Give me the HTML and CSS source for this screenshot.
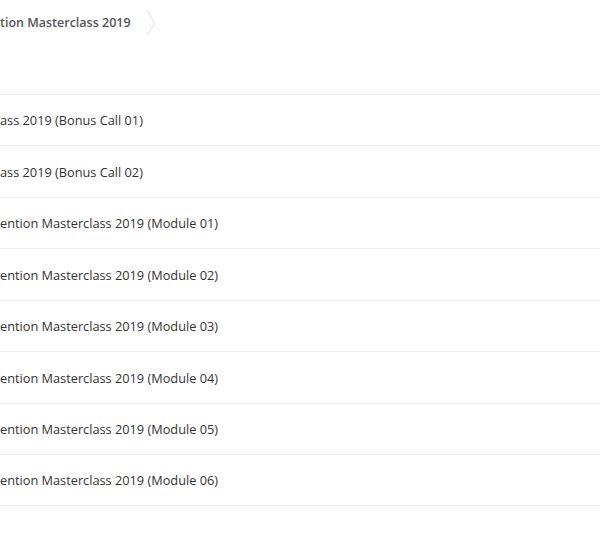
FILE: index.html
```html
<!DOCTYPE html>
<html lang="en">
<head>
  <meta charset="UTF-8" />
  <meta name="viewport" content="width=device-width, initial-scale=1.0" />
  <title>Masterclass 2019</title>
  <link rel="stylesheet" href="styles.css">
</head>
<body>
  <div class="page">
    <div class="breadcrumb">
      <span class="crumb">tion Masterclass 2019</span>
      <svg class="sep" width="10" height="26" viewBox="0 0 10 26"><path d="M1 0.5 L8.5 13 L1 25.5" fill="none" stroke="#dcdcdc" stroke-width="1"/></svg>
    </div>

    <ul class="lessons">
      <li class="lesson">ass 2019 (Bonus Call 01)</li>
      <li class="lesson">ass 2019 (Bonus Call 02)</li>
      <li class="lesson">ention Masterclass 2019 (Module 01)</li>
      <li class="lesson">ention Masterclass 2019 (Module 02)</li>
      <li class="lesson">ention Masterclass 2019 (Module 03)</li>
      <li class="lesson">ention Masterclass 2019 (Module 04)</li>
      <li class="lesson">ention Masterclass 2019 (Module 05)</li>
      <li class="lesson">ention Masterclass 2019 (Module 06)</li>
    </ul>
  </div>
</body>
</html>
```

FILE: styles.css
```css
body {
  margin: 0;
  background-color: #ffffff;
  color: #333333;
  font-family: "Open Sans", Arial, sans-serif;
}
.page {
  width: 600px;
}
.breadcrumb {
  display: flex;
  align-items: center;
  height: 93.6px;
  padding-bottom: 48px;
  box-sizing: border-box;
}
.crumb {
  font-size: 12.5px;
  font-weight: 600;
  color: #555555;
  white-space: nowrap;
}
.sep {
  margin-left: 15px;
}
.lessons {
  list-style: none;
  margin: 0;
  padding: 0;
}
.lesson {
  display: flex;
  align-items: center;
  height: 51.5px;
  padding-top: 1px;
  box-sizing: border-box;
  border-top: 1px solid #eeeeee;
  font-size: 12.75px;
  color: #333333;
  white-space: nowrap;
}
.lesson:last-child {
  border-bottom: 1px solid #eeeeee;
}
```
